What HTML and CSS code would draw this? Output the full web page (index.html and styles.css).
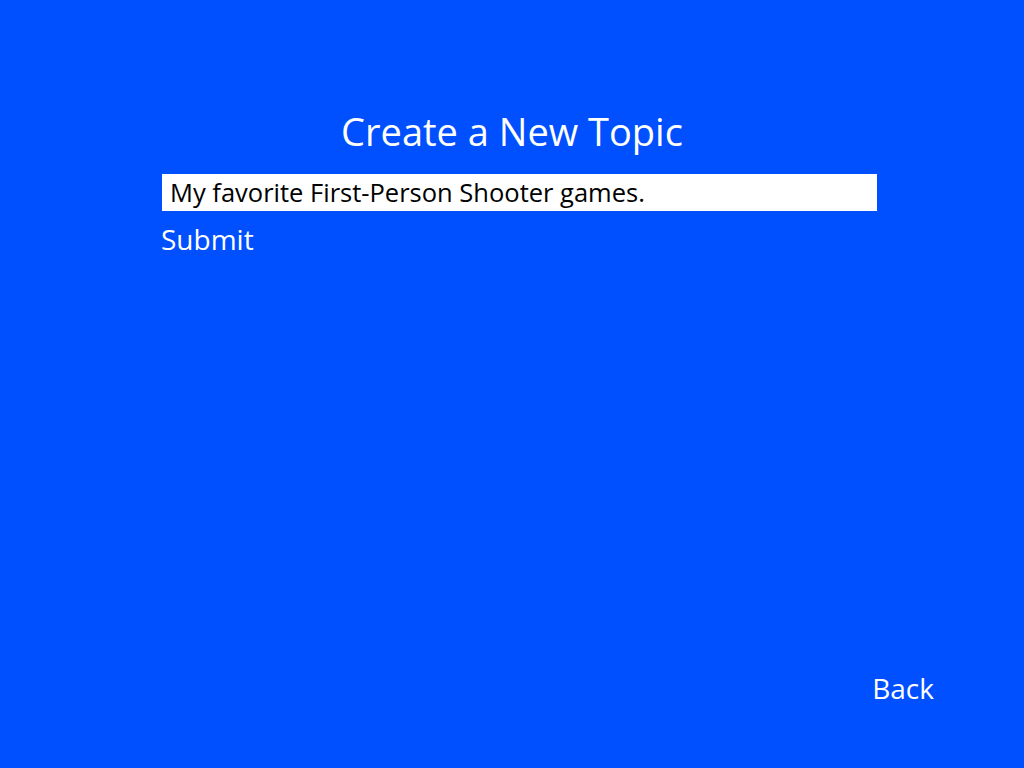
FILE: index.html
```html
<!DOCTYPE html>
<html>
<head>
<meta charset="utf-8">
<link rel="stylesheet" href="styles.css">
</head>
<body>
<div class="page">
  <h1 class="title">Create a New Topic</h1>
  <div class="form">
    <div class="input">My favorite First-Person Shooter games.</div>
    <div class="submit">Submit</div>
  </div>
  <div class="footer">
    <div class="back">Back</div>
  </div>
</div>
</body>
</html>
```
FILE: styles.css
```css
html, body {
  margin: 0;
  padding: 0;
  background: #0050ff;
}
.page {
  width: 1024px;
  height: 768px;
  display: flex;
  flex-direction: column;
  font-family: "Open Sans", "Noto Sans", sans-serif;
  color: #ffffff;
}
.title {
  margin: 107px 0 0 0;
  font-weight: 400;
  font-size: 38px;
  line-height: 48px;
  text-align: center;
}
.form {
  margin: 19px 0 0 162px;
  width: 715px;
  display: flex;
  flex-direction: column;
}
.input {
  background: #ffffff;
  color: #000000;
  height: 37px;
  box-sizing: border-box;
  padding: 0 8px;
  font-size: 25.5px;
  line-height: 37px;
  white-space: nowrap;
}
.submit {
  margin-top: 9px;
  margin-left: -1px;
  font-size: 28px;
  line-height: 38px;
}
.footer {
  margin-top: auto;
  display: flex;
  justify-content: flex-end;
  padding: 0 90px 60px 0;
}
.back {
  font-size: 28px;
  line-height: 40px;
}
```
